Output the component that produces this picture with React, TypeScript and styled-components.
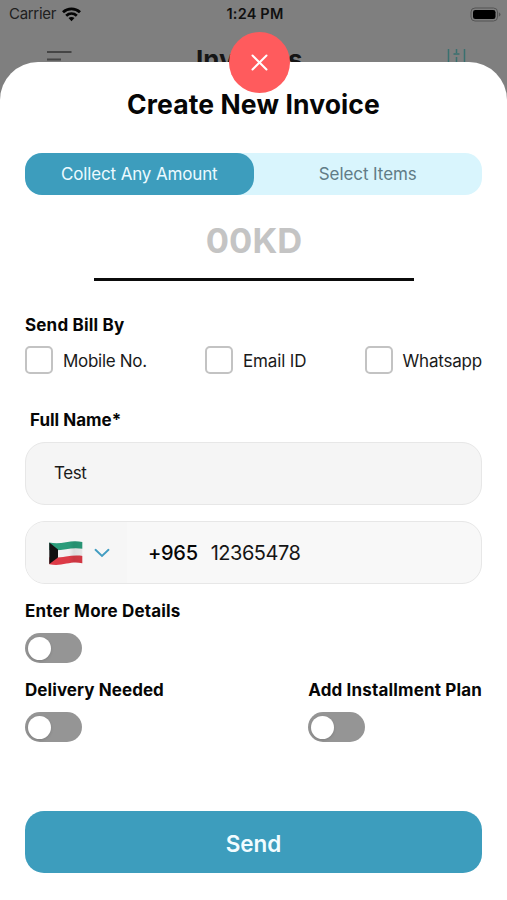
import React from "react";
import styled, { createGlobalStyle } from "styled-components";

const GlobalStyle = createGlobalStyle`
  * { box-sizing: border-box; }
  body { margin: 0; background: #7f7f7f; font-family: Inter, "Liberation Sans", sans-serif; color: #060606; }
  button, input { font: inherit; color: inherit; }
`;

const Screen = styled.main`
  width: 507px;
  height: 900px;
  display: flex;
  flex-direction: column;
  background: #7f7f7f;
`;

const StatusBar = styled.header`
  height: 28px;
  flex: none;
  display: grid;
  grid-template-columns: 1fr auto 1fr;
  align-items: center;
  padding: 0 6px 0 9px;
`;

const Carrier = styled.div`
  display: flex;
  align-items: center;
  gap: 6px;
`;

const Battery = styled.svg`
  justify-self: end;
`;

const NavBar = styled.div`
  height: 34px;
  flex: none;
  display: grid;
  grid-template-columns: 149px 1fr auto;
  align-items: start;
  padding: 14px 40px 0 47px;
`;

const Text = styled.span<{ $size: number; $weight?: number; $spacing?: number; $color?: string }>`
  display: inline-block;
  font-size: ${(p) => p.$size}px;
  font-weight: ${(p) => p.$weight ?? 400};
  letter-spacing: ${(p) => p.$spacing ?? 0}px;
  color: ${(p) => p.$color ?? "#060606"};
  line-height: 1.2;
  white-space: nowrap;
`;

const NavTitle = styled.div`
  padding-top: 2px;
`;

const Sheet = styled.section`
  position: relative;
  flex: 1;
  display: flex;
  flex-direction: column;
  padding: 24px 25px 0;
  background: #fff;
  border-radius: 38px 38px 0 0;
`;

const CloseButton = styled.button`
  position: absolute;
  top: -30.5px;
  left: 228.5px;
  width: 61px;
  height: 61px;
  padding: 0;
  border: 0;
  border-radius: 50%;
  background: #ff5b5d;
  display: grid;
  place-items: center;
`;

const Title = styled.h1`
  height: 36px;
  margin: 0;
  padding-top: 1px;
  display: flex;
  align-items: center;
  justify-content: center;
`;

const Tabs = styled.div`
  margin-top: 31px;
  height: 42px;
  flex: none;
  display: grid;
  grid-template-columns: 1fr 1fr;
  border-radius: 17px;
  background: #d9f5fd;
`;

const Tab = styled.button<{ $active?: boolean }>`
  border: 0;
  padding: 0;
  border-radius: 17px;
  background: ${(p) => (p.$active ? "#3d9dbd" : "transparent")};
`;

const Amount = styled.div`
  width: 320px;
  height: 86px;
  flex: none;
  margin-left: 69px;
  padding-top: 25px;
  text-align: center;
  border-bottom: 3px solid #0b0b0b;
`;

const Label = styled.div<{ $top?: number; $indent?: number }>`
  height: 24px;
  flex: none;
  display: flex;
  align-items: center;
  margin-top: ${(p) => p.$top ?? 0}px;
  padding-left: ${(p) => p.$indent ?? 0}px;
`;

const Options = styled.div`
  display: flex;
  justify-content: space-between;
  margin-top: 9px;
`;

const Option = styled.div`
  display: flex;
  align-items: center;
  gap: 10px;
  ${Text} { padding-top: 2px; }
`;

const Box = styled.span`
  width: 28px;
  height: 28px;
  border: 2px solid #c3c3c3;
  border-radius: 5px;
`;

const Field = styled.div<{ $top: number; $bg: string; $pad: number }>`
  height: 63px;
  flex: none;
  margin-top: ${(p) => p.$top}px;
  padding-left: ${(p) => p.$pad}px;
  display: flex;
  align-items: center;
  border: 1px solid #e7e7e7;
  border-radius: 20px;
  background: ${(p) => p.$bg};
  overflow: hidden;
`;

const Country = styled.div`
  width: 101px;
  height: 100%;
  display: flex;
  align-items: center;
  gap: 10px;
  padding-left: 22px;
  background: #f6f6f6;
`;

const PhoneNumber = styled.div`
  display: flex;
  gap: 13px;
  padding-left: 21px;
`;

const Toggle = styled.span`
  width: 57px;
  height: 30px;
  display: block;
  padding: 4px 3px;
  margin-top: 10px;
  border-radius: 15px;
  background: #959595;
  &::after {
    content: "";
    display: block;
    width: 23px;
    height: 23px;
    border-radius: 50%;
    background: #fff;
    box-shadow: 0 1px 3px rgba(0, 0, 0, 0.15);
  }
`;

const ToggleRow = styled.div`
  display: flex;
  justify-content: space-between;
  margin-top: 15px;
`;

const SendButton = styled.button`
  height: 62px;
  flex: none;
  margin-top: 69px;
  padding: 3px 0 0;
  border: 0;
  border-radius: 19px;
  background: #3d9dbd;
`;

const Flag = () => (
  <svg width="36" height="26" viewBox="0 0 36 26">
    <defs>
      <clipPath id="flag">
        <path d="M1.300 2.500C7 3.800 12 3.400 18 2.200C24 1 29 .8 34.300 2V23.200C28.500 22 24 22.500 18.500 23.600C12 25 7 25.400 1.300 24.200Z" />
      </clipPath>
      <linearGradient id="fold" x1="0" x2="1">
        <stop offset="0" stopColor="#000" stopOpacity="0" />
        <stop offset=".58" stopColor="#000" stopOpacity=".02" />
        <stop offset=".72" stopColor="#000" stopOpacity=".1" />
        <stop offset="1" stopColor="#000" stopOpacity=".05" />
      </linearGradient>
    </defs>
    <g clipPath="url(#flag)">
      <rect width="36" height="26" fill="#f5f4f5" />
      <path d="M0 0H36V9C29 7.800 24 8.200 18 9.200C12 10.400 6 10.600 0 9.800Z" fill="#2b9e7c" />
      <path d="M0 17.200C7 18 12 17.500 18 16.600C24 15.500 30 15.200 36 16.200V26H0Z" fill="#df3b47" />
      <path d="M0 1.500L10 9.500V17.500L0 25Z" fill="#111" />
      <rect width="36" height="26" fill="url(#fold)" />
    </g>
  </svg>
);

const options = [
  { name: "Mobile No.", spacing: -0.3 },
  { name: "Email ID", spacing: -0.15 },
  { name: "Whatsapp", spacing: -0.2 },
];

export default function App() {
  return (
    <Screen>
      <GlobalStyle />
      <StatusBar>
        <Carrier>
          <Text $size={15} $spacing={-0.3} $color="#202020">Carrier</Text>
          <svg width="19" height="15" viewBox="0 0 19 15" fill="none" stroke="#050505" strokeWidth="2.8">
            <path d="M1 5.300C5.800.8 13.200.8 18 5.300" />
            <path d="M4.200 8.700C7.300 5.900 11.700 5.900 14.800 8.700" />
            <path d="M6.500 11.100C8.200 9.600 10.800 9.600 12.500 11.100L9.500 14.200Z" fill="#050505" stroke="none" />
          </svg>
        </Carrier>
        <Text $size={14.5} $weight={600} $spacing={0.2} $color="#101010">1:24 PM</Text>
        <Battery width="31" height="15" viewBox="0 0 31 15">
          <rect x="1" y="1" width="26.500" height="13" rx="4" fill="none" stroke="#555" />
          <rect x="3" y="3" width="22.500" height="9" rx="2.300" fill="#000" />
          <path d="M28.800 5.200Q30.500 6 30.500 7.500T28.800 9.800Z" fill="#555" />
        </Battery>
      </StatusBar>
      <NavBar>
        <svg width="25" height="20" viewBox="0 0 25 20" stroke="#454545" strokeWidth="1.800">
          <path d="M0 10H24.500M0 17.500H14" />
        </svg>
        <NavTitle><Text $size={26} $weight={700} $color="#151515">Invoices</Text></NavTitle>
        <svg width="20" height="26" viewBox="0 0 20 26" stroke="#39706f" strokeWidth="1.500" fill="none">
          <path d="M1.500 7V25M9.500 7V11M6.500 12H12.500M9.500 15V25M17.500 7V25" />
        </svg>
      </NavBar>
      <Sheet>
        <CloseButton aria-label="Close">
          <svg width="17" height="17" viewBox="0 0 17 17" stroke="#fff" strokeWidth="2" strokeLinecap="round">
            <path d="M1.500 1.500L15.500 15.500M15.500 1.500L1.500 15.500" />
          </svg>
        </CloseButton>
        <Title>
          <Text $size={26.5} $weight={700} $spacing={0.12}>Create New Invoice</Text>
        </Title>
        <Tabs>
          <Tab $active><Text $size={17} $spacing={-0.15} $color="#ecfaff">Collect Any Amount</Text></Tab>
          <Tab><Text $size={17} $spacing={-0.08} $color="#617c86">Select Items</Text></Tab>
        </Tabs>
        <Amount><Text $size={34.5} $weight={700} $color="#c4c4c4">00KD</Text></Amount>
        <Label $top={32}><Text $size={17} $weight={700} $spacing={0.18}>Send Bill By</Text></Label>
        <Options>
          {options.map(({ name, spacing }) => (
            <Option key={name}><Box /><Text $size={17} $spacing={spacing} $color="#1a1a1a">{name}</Text></Option>
          ))}
        </Options>
        <Label $top={34} $indent={5}><Text $size={17} $weight={700}>Full Name*</Text></Label>
        <Field $top={10} $bg="#f5f5f5" $pad={28}><Text $size={17} $spacing={-0.4} $color="#1a1a1a">Test</Text></Field>
        <Field $top={16} $bg="#f8f8f8" $pad={0}>
          <Country>
            <Flag />
            <svg width="16" height="10" viewBox="0 0 16 10" fill="none" stroke="#429dc2" strokeWidth="1.900" strokeLinecap="round">
              <path d="M1.500 1.800L8 8L14.500 1.800" />
            </svg>
          </Country>
          <PhoneNumber>
            <Text $size={20} $weight={500} $spacing={-0.3}>+965</Text>
            <Text $size={20} $spacing={-0.5} $color="#151515">12365478</Text>
          </PhoneNumber>
        </Field>
        <Label $top={15}><Text $size={17} $weight={700} $spacing={0.18}>Enter More Details</Text></Label>
        <Toggle />
        <ToggleRow>
          <div>
            <Label><Text $size={17} $weight={700} $spacing={0.07}>Delivery Needed</Text></Label>
            <Toggle />
          </div>
          <div>
            <Label><Text $size={17} $weight={700} $spacing={0.16}>Add Installment Plan</Text></Label>
            <Toggle />
          </div>
        </ToggleRow>
        <SendButton><Text $size={22.5} $weight={600} $color="#f2fcff">Send</Text></SendButton>
      </Sheet>
    </Screen>
  );
}
